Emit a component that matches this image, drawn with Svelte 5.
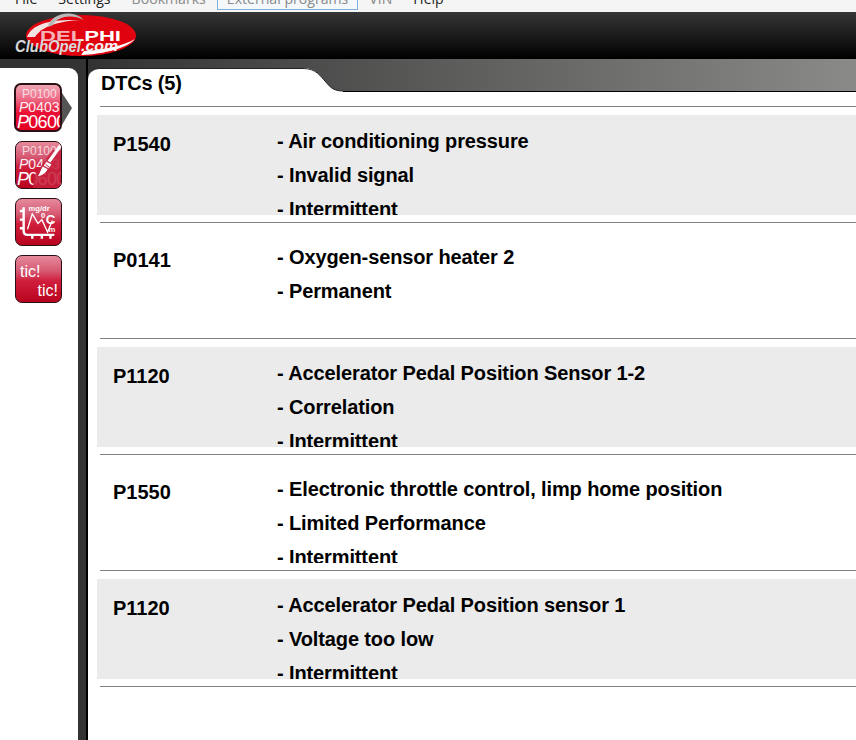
<script lang="ts">
	const menu = [
		{ label: 'File' },
		{ label: 'Settings' },
		{ label: 'Bookmarks', muted: true },
		{ label: 'External programs', muted: true, hover: true },
		{ label: 'VIN', muted: true },
		{ label: 'Help' }
	];

	const dtcs = [
		{ code: 'P1540', lines: ['Air conditioning pressure', 'Invalid signal', 'Intermittent'] },
		{ code: 'P0141', lines: ['Oxygen-sensor heater 2', 'Permanent'] },
		{ code: 'P1120', lines: ['Accelerator Pedal Position Sensor 1-2', 'Correlation', 'Intermittent'] },
		{ code: 'P1550', lines: ['Electronic throttle control, limp home position', 'Limited Performance', 'Intermittent'] },
		{ code: 'P1120', lines: ['Accelerator Pedal Position sensor 1', 'Voltage too low', 'Intermittent'] }
	];
</script>

<nav class="menu">
	<ul>
		{#each menu as item}
			<li class:muted={item.muted} class:hover={item.hover}>{item.label}</li>
		{/each}
	</ul>
</nav>

<header class="brand">
	<svg class="logo" viewBox="0 12 150 47" width="150" height="47" aria-label="Delphi ClubOpel.com">
		<ellipse cx="81" cy="35.5" rx="55" ry="20.5" fill="#e0030f" />
		<path d="M27 37 C32 24 50 19 80 20 C60 21 42 26 35 37 Z" fill="#f3e3e3" />
		<path d="M48 27 C50 14 72 8 84 20 C72 14 58 16 53 25 Z" fill="#b9b9b9" />
		<path d="M81 55 C105 54 127 48 135 39 C125 45 105 50 84 51 Z" fill="#fff" />
		<text x="40" y="40.5" class="delphi" textLength="81" lengthAdjust="spacingAndGlyphs">DELPHI</text>
		<rect x="40" y="30" width="38" height="11" fill="#e0030f" opacity=".3" />
		<text x="15" y="52" class="club" textLength="66" lengthAdjust="spacingAndGlyphs">ClubOpel</text>
		<text x="81" y="51" class="com" textLength="37" lengthAdjust="spacingAndGlyphs">.com</text>
	</svg>
</header>

<div class="workspace">
	<aside class="side">
		<button class="tool active">
			<span class="codes">
				<span class="c1">P0100</span>
				<span class="c2"><i>P</i>0403</span>
				<span class="c3"><i>P</i>0600</span>
			</span>
		</button>
		<button class="tool">
			<span class="codes">
				<span class="c1">P0100</span>
				<span class="c2"><i>P</i>0403</span>
				<span class="c3"><i>P</i>0600</span>
			</span>
			<svg class="over" viewBox="0 0 47 47">
				<path d="M38 8 L18 36 L18 48 L50 48 L50 8 Z" fill="#c5203c" opacity=".88" />
				<path d="M46 1 L48 4 L36 21 L33 19 Z" fill="#fff" />
				<path d="M32 20 L37 23 L34 27 L29 24 Z" fill="#fff" />
				<path d="M28 25 L33 28 C31 32 27 35 23 35 C25 32 26 28 28 25 Z" fill="#fff" />
				<path d="M31 23 L35 26" stroke="#c5203c" stroke-width="1" />
			</svg>
		</button>
		<button class="tool">
			<svg class="over" viewBox="0 0 47 47">
				<g fill="none" stroke="#fff">
					<path d="M8 8 V33 Q8 37 12 37 H40" stroke-width="2.5" />
					<path d="M4 12 H8 M4 21 H8 M4 30 H8 M17 41 V37 M27 41 V37 M36 41 V37" stroke-width="2.5" />
					<path d="M12 31 L17 15 L23 25 L27 21 L33 34 L38 22" stroke-width="1.4" />
				</g>
				<text x="13" y="12" class="unit small">mg/dr</text>
				<text x="26" y="19" class="unit small">0</text>
				<text x="31" y="26" class="unit big">C</text>
				<text x="34" y="34" class="unit small">m</text>
			</svg>
		</button>
		<button class="tool tic">
			<span>tic!</span>
			<span>tic!</span>
		</button>
		<svg class="pointer" viewBox="0 0 10 32" width="10" height="32"><path d="M0 0 L10 15 L0 32 Z" fill="#555" /></svg>
	</aside>

	<main class="main">
		<div class="tabstrip">
			<div class="tab">DTCs (5)</div>
			<svg class="curve" viewBox="0 0 42 24" width="40" height="24" preserveAspectRatio="none">
				<path d="M0 0 C14 0 18 8 24 14 C29 20 33 23 42 23 V24 H0 Z" fill="#fff" />
				<path d="M0 .5 C14 .5 18 8 24 14 C29 20 33 23 42 23" fill="none" stroke="#222" />
			</svg>
			<div class="strip-rest"></div>
		</div>
		<div class="panel">
			<ul class="list">
				{#each dtcs as dtc, i}
					<li class="item">
						<div class="row" class:shaded={i % 2 === 0}>
							<div class="code">{dtc.code}</div>
							<div class="desc">
								{#each dtc.lines as line}
									<div>- {line}</div>
								{/each}
							</div>
						</div>
					</li>
				{/each}
			</ul>
		</div>
	</main>
</div>

<style>
	:global(body) {
		margin: 0;
		background: #fff;
		overflow: hidden;
	}
	ul {
		list-style: none;
		margin: 0;
		padding: 0;
	}
	.menu {
		height: 12px;
		overflow: hidden;
		background: #f5f5f5;
		font: 14.1px "Open Sans", sans-serif;
		color: #222;
	}
	.menu ul {
		display: flex;
		gap: 1px;
		height: 10px;
		padding-left: 5px;
		align-items: flex-end;
	}
	.menu li {
		flex: none;
		padding: 0 9px;
		line-height: 20px;
		border: 1px solid transparent;
	}
	.menu li.muted {
		color: #8a8a8a;
	}
	.menu li.hover {
		border-color: #7fb2de;
		background: #f4f8fb;
	}
	.brand {
		height: 47px;
		background: linear-gradient(#363636, #000);
	}
	.logo {
		display: block;
		overflow: visible;
	}
	.logo text {
		font-family: "Liberation Sans", sans-serif;
		font-weight: 700;
	}
	.delphi {
		font-size: 14px;
		fill: #fff;
	}
	.club {
		font-size: 16px;
		font-style: italic;
		fill: #d8d8d8;
	}
	.com {
		font-size: 14px;
		font-style: italic;
		fill: #f4f4f4;
	}
	.workspace {
		display: flex;
		height: 681px;
		background: #333;
	}
	.side {
		position: relative;
		box-sizing: border-box;
		flex: none;
		display: flex;
		flex-direction: column;
		gap: 9px;
		width: 78px;
		margin-top: 9px;
		padding: 15px 0 0 15px;
		background: #fff;
		border-top-right-radius: 9px;
	}
	.tool {
		position: relative;
		box-sizing: border-box;
		width: 47px;
		height: 48px;
		padding: 0;
		overflow: hidden;
		color: #fff;
		border: 1px solid #2a1015;
		border-radius: 7px;
		background: linear-gradient(#e68a9c 0, #d65a73 32%, #cf1d3b 55%, #b9041f 100%);
		font-family: "Liberation Sans", sans-serif;
	}
	.tool.active {
		width: 48px;
		height: 49px;
		margin-left: -1px;
		background: linear-gradient(#f0a5b4 0, #ee6d88 30%, #ea0f33 62%, #e40022 100%);
		border-width: 2px;
	}
	.codes {
		display: flex;
		flex-direction: column;
		align-items: flex-start;
		white-space: nowrap;
		line-height: 13px;
		padding: 2px 0 0 1px;
	}
	.codes i {
		font-style: italic;
	}
	.c1 {
		font-size: 12px;
		margin-left: 5px;
		opacity: .7;
	}
	.c2 {
		font-size: 14px;
		margin-left: 2px;
		opacity: .92;
	}
	.c3 {
		font-size: 18px;
		letter-spacing: -.7px;
		line-height: 16px;
	}
	.over {
		position: absolute;
		inset: 0;
		width: 100%;
		height: 100%;
	}
	.unit {
		fill: #fff;
		font-family: "Liberation Sans", sans-serif;
		font-weight: 700;
	}
	.unit.small {
		font-size: 8px;
	}
	.unit.big {
		font-size: 14px;
	}
	.tic {
		display: flex;
		flex-direction: column;
		padding: 6px 3px 0 4px;
		font-size: 16px;
		line-height: 19px;
		text-align: left;
	}
	.tic span:last-child {
		align-self: flex-end;
		font-size: 16px;
	}
	.pointer {
		position: absolute;
		left: 62px;
		top: 25px;
	}
	.main {
		flex: 1;
		min-width: 0;
		display: flex;
		flex-direction: column;
		margin-left: 10px;
		background: #000;
		box-shadow: -2px 0 0 #000;
	}
	.tabstrip {
		display: flex;
		align-items: flex-end;
		height: 33px;
		background: linear-gradient(90deg, #333, #8a8a88);
	}
	.tab {
		position: relative;
		box-sizing: border-box;
		flex: none;
		width: 215px;
		height: 24px;
		padding: 3px 0 0 13px;
		background: #fff;
		border-top: 1px solid #222;
		border-top-left-radius: 11px;
		font: 700 20px/22px "Liberation Sans", sans-serif;
		letter-spacing: -.2px;
		color: #000;
	}
	.curve {
		flex: none;
		display: block;
	}
	.strip-rest {
		flex: 1;
		height: 1px;
		background: #000;
	}
	.panel {
		flex: 1;
		background: #fff;
		padding-top: 14px;
	}
	.list {
		margin-left: 12px;
		border-top: 1px solid #808080;
	}
	.item {
		box-sizing: border-box;
		height: 116px;
		padding-top: 8px;
		border-bottom: 1px solid #808080;
	}
	.row {
		display: flex;
		box-sizing: border-box;
		height: 100px;
		margin-left: -3px;
		overflow: hidden;
		font: 700 20px/34px "Liberation Sans", sans-serif;
		color: #000;
	}
	.row.shaded {
		background: #ebebeb;
	}
	.code {
		flex: none;
		width: 180px;
		padding: 12px 0 0 16px;
		box-sizing: border-box;
	}
	.desc {
		padding-top: 9px;
		white-space: nowrap;
		letter-spacing: -.12px;
	}
</style>
